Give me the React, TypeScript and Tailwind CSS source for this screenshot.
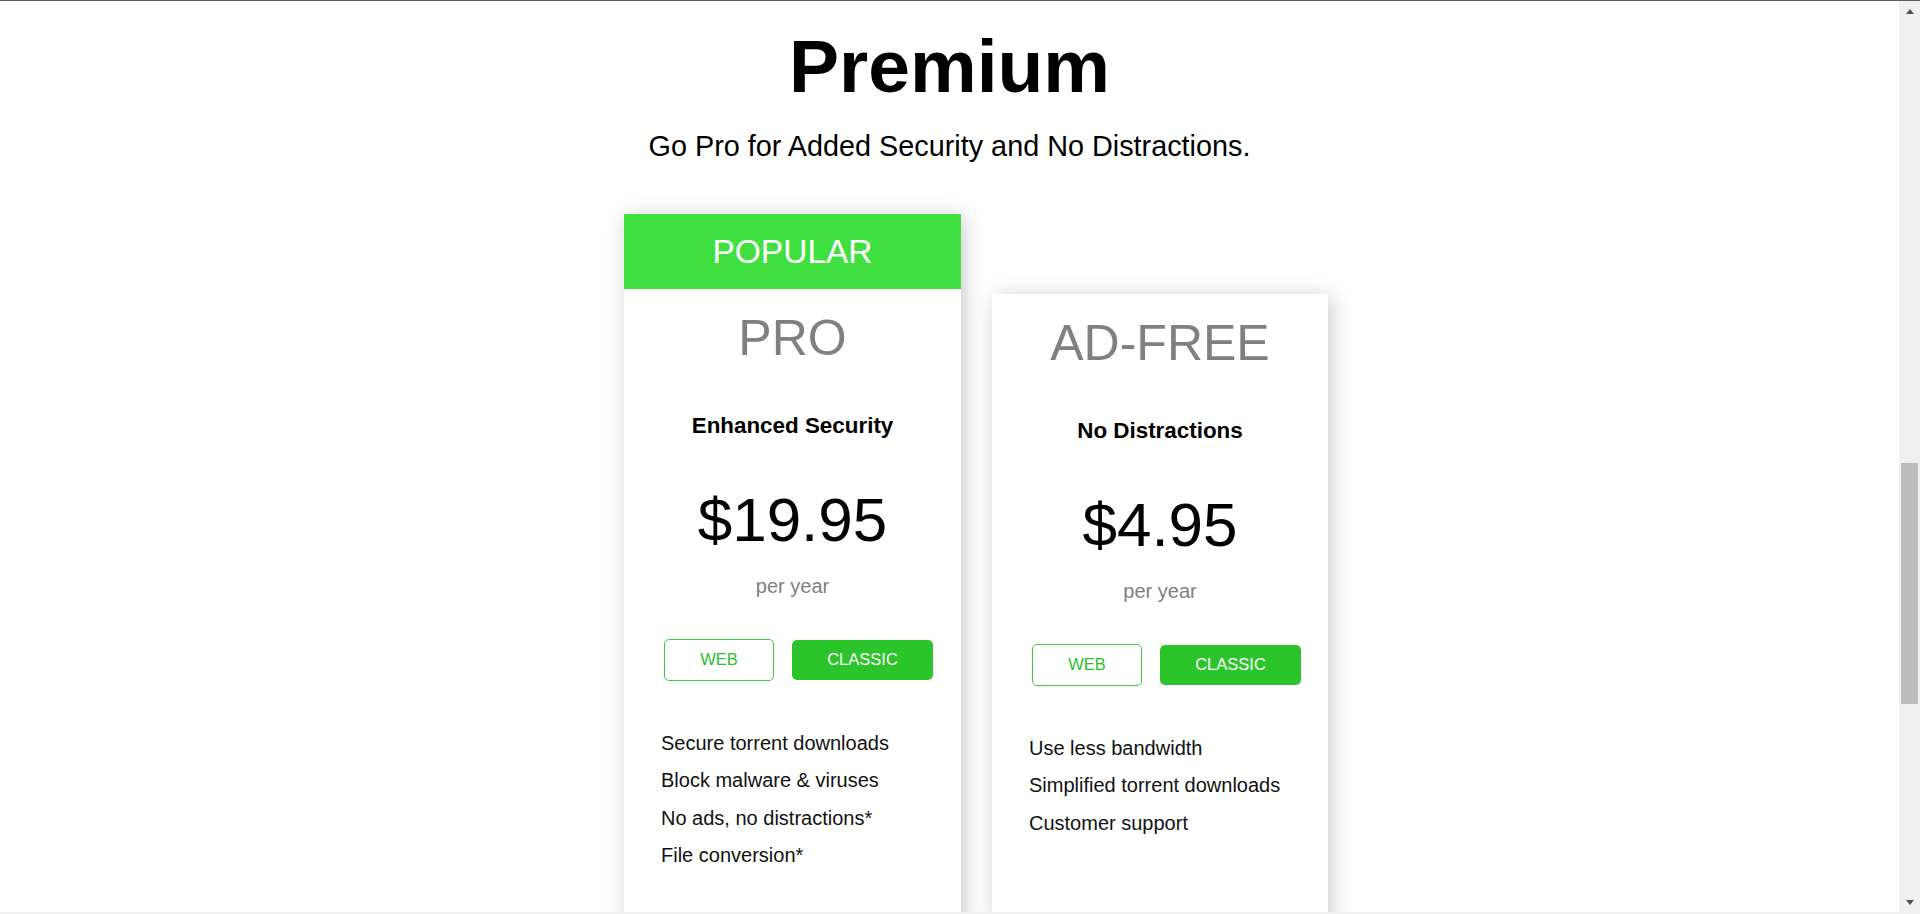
import React from "react";

type Plan = {
  name: string;
  tagline: string;
  price: string;
  features: string[];
  popular?: boolean;
};

const plans: Plan[] = [
  {
    name: "PRO",
    tagline: "Enhanced Security",
    price: "$19.95",
    popular: true,
    features: [
      "Secure torrent downloads",
      "Block malware & viruses",
      "No ads, no distractions*",
      "File conversion*",
    ],
  },
  {
    name: "AD-FREE",
    tagline: "No Distractions",
    price: "$4.95",
    features: ["Use less bandwidth", "Simplified torrent downloads", "Customer support"],
  },
];

const PlanCard = ({ plan }: { plan: Plan }) => {
  return (
    <div
      className={`bg-white shadow-[3px_3px_20px_rgba(0,0,0,0.22)] ${
        plan.popular ? "w-[337px]" : "w-[336px] mt-[80px]"
      }`}
    >
      {/* green ribbon on the featured plan */}
      {plan.popular && (
        <div className="h-[75px] bg-[#40e040] flex items-center justify-center text-white text-[33.5px] leading-none">
          POPULAR
        </div>
      )}
      <div className="flex flex-col items-center pt-[24px] pb-[80px]">
        <h2 className="text-[50px] leading-[50px] text-[#808080]">{plan.name}</h2>
        <h3 className="mt-[52px] text-[22.4px] leading-[22.4px] font-bold text-black">{plan.tagline}</h3>
        <div className="mt-[52px] text-[62px] leading-[62px] text-black">{plan.price}</div>
        <div className="mt-[24.5px] text-[20px] leading-[20px] text-[#808080]">per year</div>

        <div className="mt-[43px] self-stretch flex items-center gap-[18px] pl-[40px]">
          <button className="w-[110px] h-[42px] rounded-[5px] border border-[#3ec83e] text-[#2dbf2d] text-[16.5px] bg-white">
            WEB
          </button>
          <button className="w-[141px] h-[40px] rounded-[5px] bg-[#2bc42b] text-white text-[16.5px]">
            CLASSIC
          </button>
        </div>

        <ul className="mt-[44px] self-stretch pl-[37px] text-[20px] leading-[37.5px] text-[#111]">
          {plan.features.map((f) => (
            <li key={f}>{f}</li>
          ))}
        </ul>
      </div>
    </div>
  );
};

export default function App() {
  return (
    <div className="h-[914px] w-full flex flex-col overflow-hidden bg-white font-['Liberation_Sans',Arial,sans-serif]">
      {/* window edge */}
      <div className="h-px bg-[#5c5c5c]" />

      <div className="flex-1 flex min-h-0">
        <main className="flex-1 overflow-hidden flex flex-col items-center">
          <h1 className="mt-[28px] text-[75px] leading-[75px] font-bold text-black">Premium</h1>
          <p className="mt-[28px] text-[28.8px] leading-[28.8px] text-black">
            Go Pro for Added Security and No Distractions.
          </p>

          <div className="mt-[53px] self-stretch flex justify-center items-start gap-[31px] pl-[53px]">
            {plans.map((p) => (
              <PlanCard key={p.name} plan={p} />
            ))}
          </div>
        </main>

        {/* scrollbar */}
        <div className="w-[21px] bg-[#f0f0f0] flex flex-col items-center">
          <div className="h-[20px] flex items-center justify-center">
            <div className="w-0 h-0 border-x-[4px] border-x-transparent border-b-[5px] border-b-[#505050]" />
          </div>
          <div className="mt-[442px] w-[17px] h-[241px] bg-[#bcbcbc]" />
          <div className="flex-1" />
          <div className="h-[20px] flex items-center justify-center">
            <div className="w-0 h-0 border-x-[4px] border-x-transparent border-t-[5px] border-t-[#505050]" />
          </div>
        </div>
      </div>

      <div className="h-[2px] bg-[#efefef]" />
    </div>
  );
}
